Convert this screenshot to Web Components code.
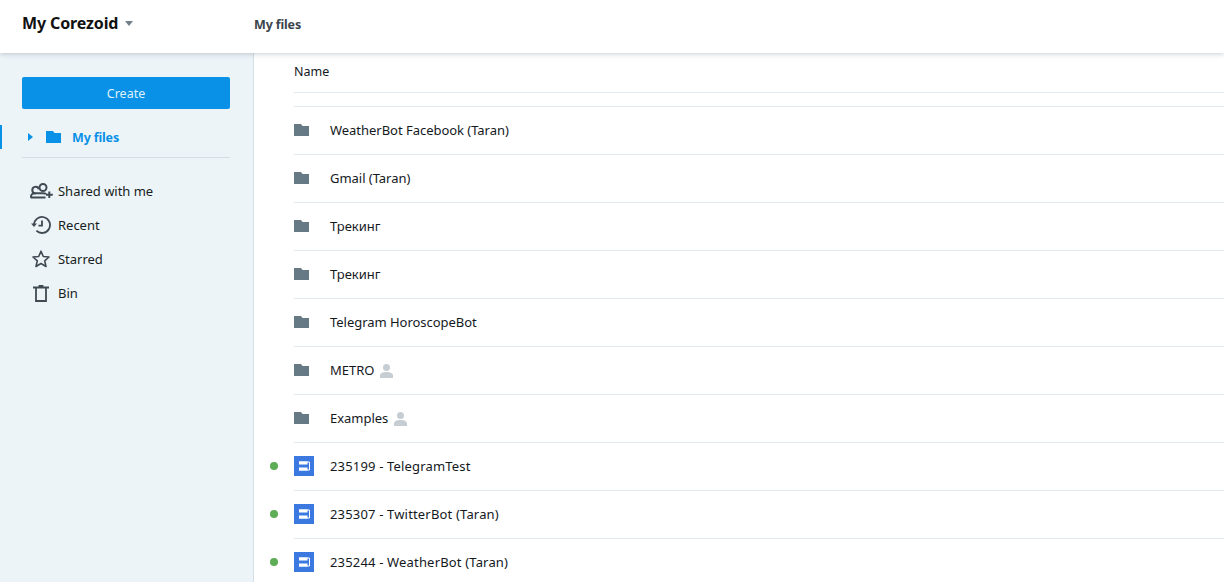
<!DOCTYPE html>
<html>
<head>
<meta charset="utf-8">
<title>My files</title>
<style>
  html, body { margin: 0; height: 100%; overflow: hidden; }
  body { font-family: "Noto Sans", "Liberation Sans", sans-serif; color: #1b2227; }
  #app { height: 582px; display: flex; flex-direction: column; }
</style>
</head>
<body>

<template id="tpl-top-bar">
  <style>
    :host {
      display: flex; align-items: center; height: 53px; flex: none;
      background: #fff; position: relative; z-index: 2;
      box-shadow: 0 1px 5px rgba(60,80,95,.28);
    }
    .brand { width: 254px; flex: none; box-sizing: border-box; padding-left: 22px; display: flex; align-items: center; gap: 7px; margin-top: -8px; }
    .brand b { font-size: 16px; font-weight: 700; color: #111; letter-spacing: -.12px; }
    .caret { width: 0; height: 0; border: 4.5px solid transparent; border-top: 5px solid #73808a; border-bottom: 0; margin-top: 1px; }
    .crumb { font-size: 12.5px; font-weight: 700; color: #3a444c; margin-top: -5px; letter-spacing: -.15px; }
  </style>
  <div class="brand"><b>My Corezoid</b><span class="caret"></span></div>
  <div class="crumb">My files</div>
</template>

<template id="tpl-side-bar">
  <style>
    :host {
      display: block; flex: none; box-sizing: border-box; width: 254px;
      background: #edf4f8; padding-top: 24px;
      box-shadow: inset -1px 0 0 #d3dfe6;
    }
    .create {
      display: block; width: 208px; height: 32px; margin: 0 0 0 22px; padding: 0;
      border: 0; border-radius: 2px; background: #0891e6; color: #dff1fc;
      font: 400 12.5px "Noto Sans", sans-serif;
    }
    .root {
      display: flex; align-items: center; height: 24px; margin-top: 16px;
      border-left: 2px solid #0891e6; padding-left: 26px;
      color: #0891e6; font-size: 12.5px; font-weight: 700; letter-spacing: -.15px;
    }
    .root .arrow { width: 0; height: 0; border: 4px solid transparent; border-left: 5px solid #0891e6; border-right: 0; margin-right: 13px; }
    .root svg { margin-right: 11px; }
    hr { border: 0; border-top: 1px solid #d3dfe6; margin: 8px 24px 0 22px; }
    nav { display: flex; flex-direction: column; padding-top: 16px; }
  </style>
  <button class="create">Create</button>
  <div class="root">
    <span class="arrow"></span>
    <svg width="15" height="12" viewBox="0 0 15 12"><path fill="#0891e6" d="M0 0h7l1.500 2H15v10H0z"/></svg>
    <span>My files</span>
  </div>
  <hr>
  <nav><slot></slot></nav>
</template>

<template id="tpl-nav-item">
  <style>
    :host { display: flex; align-items: center; height: 34px; padding-left: 28px; font-size: 13px; color: #171d22; letter-spacing: -.02px; }
    .ico { width: 26px; flex: none; margin-right: 4px; display: flex; justify-content: center; }
    ::slotted(svg) { display: block; }
  </style>
  <span class="ico"><slot name="icon"></slot></span>
  <span><slot></slot></span>
</template>

<template id="tpl-file-row">
  <style>
    :host { display: flex; align-items: center; height: 47px; border-bottom: 1px solid #e3eaef; margin-left: 40px; position: relative; font-size: 13px; color: #14191d; letter-spacing: -.03px; }
    :host([kind="process"]) { letter-spacing: .17px; }
    .ico { width: 36px; flex: none; display: flex; align-items: center; }
    .name { margin-bottom: 2px; }
    .dot { position: absolute; left: -24px; top: 19px; width: 8px; height: 8px; border-radius: 50%; background: #5cad55; }
    .person { margin-left: 6px; display: none; }
    :host([shared]) .person { display: block; }
    :host(:not([status])) .dot { display: none; }
  </style>
  <span class="dot"></span>
  <span class="ico"><slot name="icon"></slot></span>
  <span class="name"><slot></slot></span>
  <svg class="person" width="13" height="14" viewBox="0 0 13 14"><circle cx="6.500" cy="3.500" r="3.500" fill="#c6ced3"/><path fill="#c6ced3" d="M0 14v-2.500c0-2.200 2.600-3.500 6.500-3.500S13 9.300 13 11.500V14z"/></svg>
</template>

<template id="tpl-file-list">
  <style>
    :host { display: block; flex: 1; overflow: hidden; background: #fff; }
    .head { height: 37px; padding-bottom: 2px; margin-left: 40px; display: flex; align-items: center; font-size: 12.5px; color: #14191d; border-bottom: 1px solid #e3eaef; }
    .gap { height: 13px; margin-left: 40px; border-bottom: 1px solid #e3eaef; }
  </style>
  <div class="head">Name</div>
  <div class="gap"></div>
  <slot></slot>
</template>

<div id="app">
  <top-bar></top-bar>
  <div style="display:flex;flex:1;min-height:0">
    <side-bar>
      <nav-item>
        <svg slot="icon" width="23" height="16" viewBox="0 0 23 16" fill="none" stroke="#3f4a52" stroke-width="2"><circle cx="13" cy="4.500" r="3.500"/><path d="M8.800 6.200a3.300 3.300 0 1 0-3 4.200M1 14.500v-1c0-2 2-3.200 4-3.200h8c1.300 0 2.400.3 3 .8M.5 14.500h15M19.300 8.500v6.500M16 11.800h6.800"/></svg>
        Shared with me
      </nav-item>
      <nav-item>
        <svg slot="icon" width="20" height="18" viewBox="0 0 20 18" fill="none" stroke="#3f4a52" stroke-width="1.800"><path d="M3 9a8 8 0 1 1 2.400 5.700"/><path fill="#3f4a52" stroke="none" d="M0 7.500h6l-3 3.600z"/><path d="M11 4.500V9.700H7.500"/></svg>
        Recent
      </nav-item>
      <nav-item>
        <svg slot="icon" width="18" height="18" viewBox="0 0 18 18" fill="none" stroke="#3f4a52" stroke-width="1.600" stroke-linejoin="round"><path d="M9 1.200l2.300 5.300 5.700.5-4.300 3.800 1.300 5.700L9 13.500l-5 3 1.300-5.700L1 7l5.700-.5z"/></svg>
        Starred
      </nav-item>
      <nav-item>
        <svg slot="icon" width="16" height="17" viewBox="0 0 16 17" fill="none" stroke="#3f4a52" stroke-width="1.800"><path d="M3 3v13h10V3M0 2.500h16M6.500 2.500V1h3v1.500"/></svg>
        Bin
      </nav-item>
    </side-bar>
    <file-list>
      <file-row kind="folder">WeatherBot Facebook (Taran)</file-row>
      <file-row kind="folder">Gmail (Taran)</file-row>
      <file-row kind="folder">Трекинг</file-row>
      <file-row kind="folder">Трекинг</file-row>
      <file-row kind="folder">Telegram HoroscopeBot</file-row>
      <file-row kind="folder" shared>METRO</file-row>
      <file-row kind="folder" shared>Examples</file-row>
      <file-row kind="process" status>235199 - TelegramTest</file-row>
      <file-row kind="process" status>235307 - TwitterBot (Taran)</file-row>
      <file-row kind="process" status>235244 - WeatherBot (Taran)</file-row>
    </file-list>
  </div>
</div>

<script>
  // every element just stamps its template into an open shadow root
  class BaseElement extends HTMLElement {
    constructor() {
      super();
      const tpl = document.getElementById(this.constructor.tplId);
      this.attachShadow({ mode: 'open' }).appendChild(tpl.content.cloneNode(true));
    }
  }

  class TopBar extends BaseElement { static tplId = 'tpl-top-bar'; }
  class SideBar extends BaseElement { static tplId = 'tpl-side-bar'; }
  class NavItem extends BaseElement { static tplId = 'tpl-nav-item'; }
  class FileList extends BaseElement { static tplId = 'tpl-file-list'; }

  const FOLDER = '<svg width="15" height="12" viewBox="0 0 15 12" style="display:block;margin-top:-1px"><path fill="#667a85" d="M0 0h7l1.500 2H15v10H0z"/></svg>';
  const PROCESS = '<svg width="20" height="20" viewBox="0 0 20 20" style="display:block;margin-top:-1px"><rect width="20" height="20" fill="#3b78e0"/><path fill="#fff" d="M5 5.300h8.500v3.200H5zM5 11.500h8.500v3.200H5z"/><path fill="none" stroke="#fff" d="M13 6h2.500v8H13"/></svg>';

  class FileRow extends BaseElement {
    static tplId = 'tpl-file-row';
    connectedCallback() {
      const holder = document.createElement('span');
      holder.slot = 'icon';
      holder.style.display = 'flex';
      holder.innerHTML = this.getAttribute('kind') === 'process' ? PROCESS : FOLDER;
      this.appendChild(holder);
    }
  }

  customElements.define('top-bar', TopBar);
  customElements.define('side-bar', SideBar);
  customElements.define('nav-item', NavItem);
  customElements.define('file-list', FileList);
  customElements.define('file-row', FileRow);
</script>
</body>
</html>
